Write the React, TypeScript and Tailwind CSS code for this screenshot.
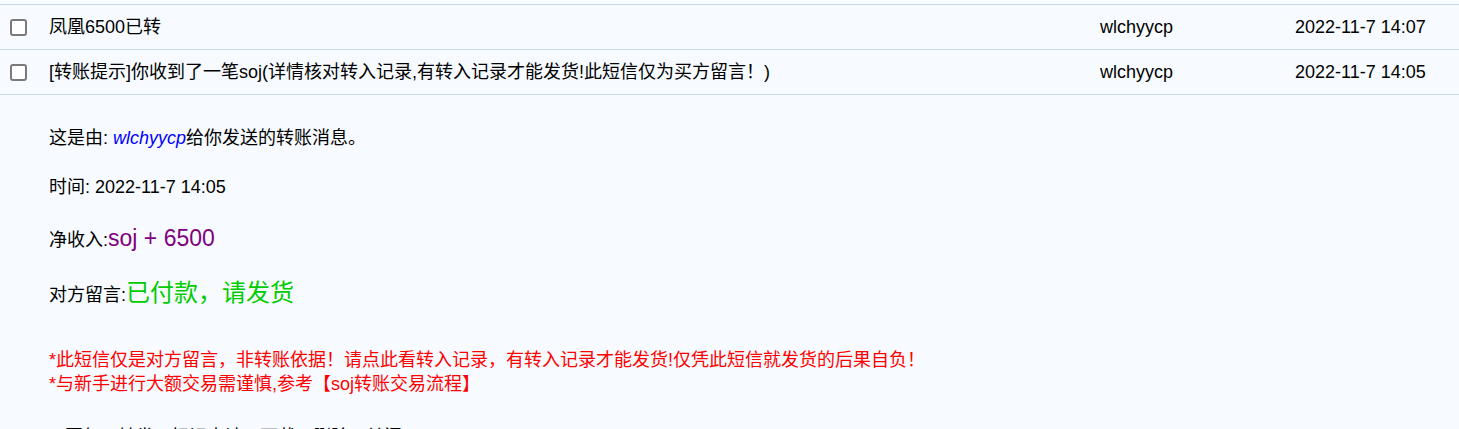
const rows = [
  { title: "凤凰6500已转", from: "wlchyycp", time: "2022-11-7 14:07" },
  {
    title:
      "[转账提示]你收到了一笔soj(详情核对转入记录,有转入记录才能发货!此短信仅为买方留言！)",
    from: "wlchyycp",
    time: "2022-11-7 14:05",
  },
];

const actions = ["回复", "转发", "标记未读", "下载", "删除", "关闭"];

const App = () => {
  return (
    <div
      className="min-h-screen bg-[#f7fbff] text-black text-[18px]"
      style={{ fontFamily: '"Liberation Sans", Arial, "Noto Sans CJK SC", sans-serif' }}
    >
      <div className="h-[4px]" />

      {/* Message list */}
      {rows.map((row) => (
        <div
          key={row.time}
          className="grid grid-cols-[49px_1fr_195px_164px] items-center h-[45px] border-t border-[#c9d9ea]"
        >
          <div className="pl-[10px] flex items-center">
            <input
              type="checkbox"
              className="appearance-none w-[17px] h-[17px] rounded-[3px] border-2 border-[#7a7a7a] bg-white"
            />
          </div>
          <div className="truncate leading-[24px]">{row.title}</div>
          <div className="leading-[24px]">{row.from}</div>
          <div className="leading-[24px]">{row.time}</div>
        </div>
      ))}

      {/* Opened message */}
      <div className="border-t border-[#c9d9ea] pl-[49px] pt-[31px]">
        <div className="leading-[24px]">
          这是由: <span className="italic text-[#0000ff]">wlchyycp</span>
          给你发送的转账消息。
        </div>
        <div className="leading-[24px] mt-[25px]">时间: 2022-11-7 14:05</div>
        <div className="leading-[30px] mt-[24px]">
          净收入:<span className="text-[23px] text-[#800080]">soj + 6500</span>
        </div>
        <div className="leading-[34px] mt-[21px]">
          对方留言:<span className="text-[24px] text-[#00cc00]">已付款，请发货</span>
        </div>

        <div className="mt-[36px] text-[#ff0000] leading-[24px]">
          <div>
            *此短信仅是对方留言，非转账依据！请点此看转入记录，有转入记录才能发货!仅凭此短信就发货的后果自负！
          </div>
          <div>*与新手进行大额交易需谨慎,参考【soj转账交易流程】</div>
        </div>

        <div className="mt-[29px] pl-[16px] flex gap-[17px] leading-[24px]">
          {actions.map((a) => (
            <a key={a} href="#" className="text-black">
              {a}
            </a>
          ))}
        </div>
      </div>
    </div>
  );
};

export default App;
